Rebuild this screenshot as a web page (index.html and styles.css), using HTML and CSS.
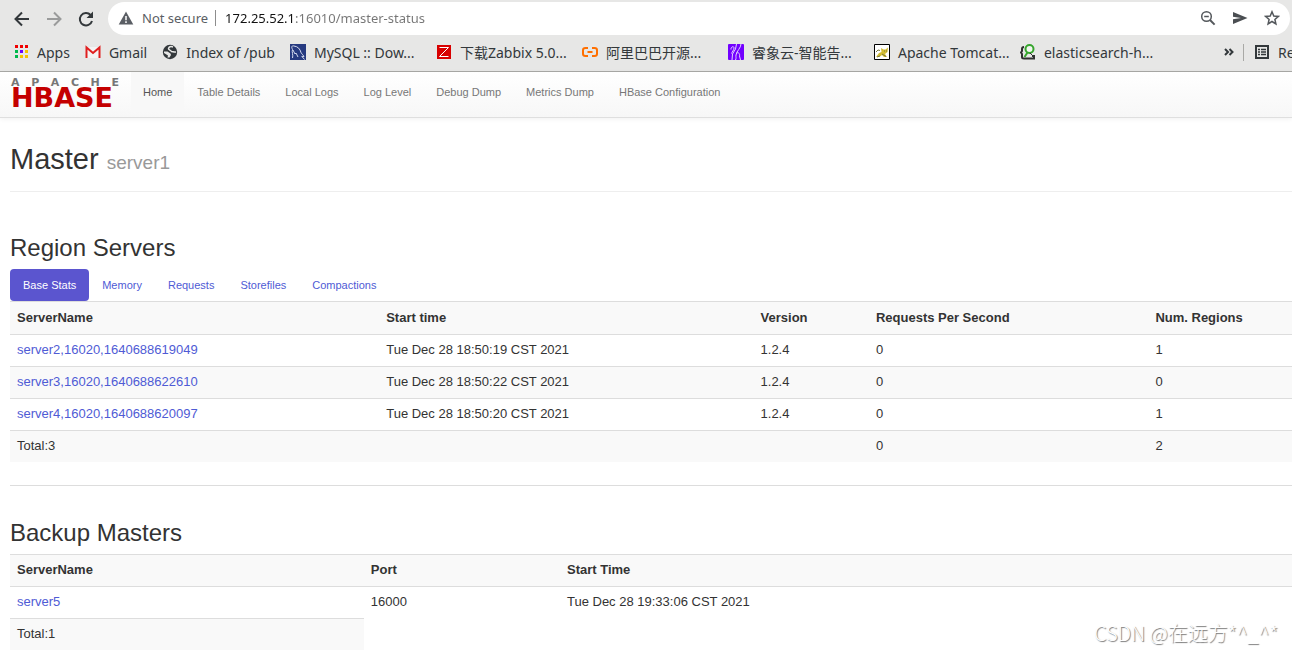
FILE: index.html
```html
<!DOCTYPE html>
<html lang="en">

<head>
    <meta charset="UTF-8">
    <title>Master: server1</title>
    <link rel="stylesheet" href="styles.css">
</head>

<body>
    <header class="browser">
        <div class="toolbar">
            <button class="tool" aria-label="Back">
                <svg width="20" height="20" viewBox="0 0 20 20" fill="none" stroke="#33383b" stroke-width="2"><path d="M17 10H4M10 3.500L3.500 10L10 16.500"/></svg>
            </button>
            <button class="tool" aria-label="Forward">
                <svg width="20" height="20" viewBox="0 0 20 20" fill="none" stroke="#9a9b9b" stroke-width="2"><path d="M3 10H16M10 3.500L16.500 10L10 16.500"/></svg>
            </button>
            <button class="tool" aria-label="Reload">
                <svg width="20" height="20" viewBox="0 0 20 20"><path d="M14.600 6A6.200 6.200 0 1 0 16 12" fill="none" stroke="#33383b" stroke-width="2"/><path d="M17 2.500V9H10.500Z" fill="#33383b"/></svg>
            </button>
            <div class="addressBar">
                <svg width="16" height="16" viewBox="0 0 16 16"><path d="M8 1.500L15.300 14.500H.7Z" fill="#5a5e64"/><path d="M8 6v4.200M8 11.200v1.800" stroke="#fff" stroke-width="1.500"/></svg>
                <span class="notSecure">Not secure</span>
                <input class="url" type="text" aria-label="Address" value="172.25.52.1:16010/master-status">
                <button class="tool" aria-label="Zoom">
                    <svg width="16" height="16" viewBox="0 0 16 16" fill="none" stroke="#54585c" stroke-width="1.500"><circle cx="6.500" cy="6.500" r="4.800"/><path d="M4.200 6.500h4.600"/><path d="M10 10l4.600 4.600" stroke-width="2"/></svg>
                </button>
                <button class="tool" aria-label="Send">
                    <svg width="16" height="16" viewBox="0 0 16 16"><path d="M1 2L15.500 8L1 14V9.300L9 8L1 6.700Z" fill="#4a4e52"/></svg>
                </button>
                <button class="tool" aria-label="Bookmark this page">
                    <svg width="16" height="16" viewBox="0 0 16 16"><path d="M8 1.800L9.800 6L14.300 6.400L10.900 9.400L11.900 13.900L8 11.500L4.100 13.900L5.100 9.400L1.700 6.400L6.200 6Z" fill="none" stroke="#54585c" stroke-width="1.500"/></svg>
                </button>
            </div>
        </div>
        <nav class="bookmarks">
            <a href="#">
                <svg width="16" height="16" viewBox="0 0 16 16"><path d="M2 1h3v3H2zM7 1h3v3H7zM12 1h3v3h-3z" fill="#f00000"/><path d="M2 6h3v3H2zM2 11h3v3H2z" fill="#00b84c"/><path d="M7 6h3v3H7z" fill="#6a00ff"/><path d="M12 6h3v3h-3zM7 11h3v3H7zM12 11h3v3h-3z" fill="#f5c400"/></svg>
                Apps
            </a>
            <a href="#">
                <svg width="16" height="16" viewBox="0 0 16 16"><path d="M1 3h14v11H1z" fill="#f4f4f4"/><path d="M1.500 14V3.500L8 9L14.500 3.500V14" fill="none" stroke="#e02020" stroke-width="2"/></svg>
                Gmail
            </a>
            <a href="#">
                <svg width="16" height="16" viewBox="0 0 16 16"><circle cx="8" cy="8" r="7.200" fill="#33383b"/><path d="M11 3C8.500 2 7 3 6.500 4.500C6 6 9 6 9.500 7.500C11 7.500 12 8.500 14 8" fill="none" stroke="#e7e7e6" stroke-width="1.500"/><path d="M2 7.500H5.500L8.500 9.500L9 11L7.500 13.500H5.500L6 11.500L2 9Z" fill="#e7e7e6"/></svg>
                Index of /pub
            </a>
            <a class="long" href="#">
                <svg width="16" height="16" viewBox="0 0 16 16"><path d="M0 0h16v16H0z" fill="#263a80"/><path d="M2.500 14C3.500 11 1.500 8 2.500 5.500C1 2.500 2 1.500 4 2C8 2.500 10 5 11 8.500C12 10.500 13.500 11 14 12.500L11.800 12.300L14.500 15.500M3 6L5 10L6 9L8 13" fill="none" stroke="#d5dbef"/></svg>
                MySQL :: Dow...
            </a>
            <a class="long" href="#">
                <svg width="16" height="16" viewBox="0 0 16 16"><path d="M1 1h14v14H1z" fill="#d80000"/><path d="M3.500 3.500H12.500L3.500 12.500H12.500" fill="none" stroke="#fff"/></svg>
                下载Zabbix 5.0...
            </a>
            <a class="long" href="#">
                <svg width="16" height="16" viewBox="0 0 16 16" fill="none" stroke="#ff6f00" stroke-width="2"><path d="M6 4H3.500Q1 4 1 6V10Q1 12 3.500 12H6M10 4H12.500Q15 4 15 6V10Q15 12 12.500 12H10M5.500 8H10.500"/></svg>
                阿里巴巴开源...
            </a>
            <a class="long" href="#">
                <svg width="16" height="16" viewBox="0 0 16 16"><rect width="16" height="16" rx="1" fill="#7200ff"/><path d="M8.500 0L7.500 5L4.500 10L4 16M3 5.500C2.500 3 6 1.500 6 4C6 6 4 8 3.500 9.500M13 0C13 4 8.500 7 8 11C7.700 13 8.500 14 7.500 16M8.500 9C11 8 12 10 11.500 12L12.500 16" fill="none" stroke="#e3d2ff"/></svg>
                睿象云-智能告...
            </a>
            <a class="long" href="#">
                <svg width="16" height="16" viewBox="0 0 16 16"><path d="M.5.500h15v15H.5z" fill="#fff" stroke="#000"/><path d="M2 13L5 9L7.500 8L7 4L9.500 5.500H11.500L14 3.500L13.500 8L11 10L13 13H10L8 11L6 12.500Z" fill="#d3bd34"/><path d="M2 8L4 6L6 6.500M3 13L6 12M8 10L12 12.500M10 7h1M12 7h1" fill="none" stroke="#77783c"/></svg>
                Apache Tomcat...
            </a>
            <a class="long" href="#">
                <svg width="16" height="16" viewBox="0 0 16 16"><path d="M4 3Q2 3 2 5V7L1 8.500L2 10V13Q2 14.500 4 14.500H14V12H12" fill="none" stroke="#303030" stroke-width="2"/><circle cx="9.500" cy="5" r="4" fill="#f1f5ef" stroke="#36a52d" stroke-width="2"/><path d="M7.500 8.500L4.500 13" stroke="#36a52d" stroke-width="2"/><path d="M10 9L13 12" stroke="#303030"/></svg>
                elasticsearch-h...
            </a>
            <button class="tool more" aria-label="More bookmarks">
                <svg width="12" height="12" viewBox="0 0 12 12" fill="none" stroke="#33383b" stroke-width="2"><path d="M2 3L5 6L2 9M6.500 3L9.500 6L6.500 9"/></svg>
            </button>
            <a class="readingList" href="#">
                <svg width="16" height="16" viewBox="0 0 16 16" fill="none" stroke="#33383b"><path d="M2 2h12v12H2z" stroke-width="2"/><path d="M4 5.500h2M7 5.500h5M4 8h2M7 8h5M4 10.500h2M7 10.500h5" stroke-width="1.500"/></svg>
                Reading list
            </a>
        </nav>
    </header>

    <nav class="navbar">
        <a class="brand" href="#">
            <span class="brandTop"><span>A</span><span>P</span><span>A</span><span>C</span><span>H</span><span>E</span></span>
            <span class="brandName">HBASE</span>
        </a>
        <a class="active" href="#">Home</a>
        <a href="#">Table Details</a>
        <a href="#">Local Logs</a>
        <a href="#">Log Level</a>
        <a href="#">Debug Dump</a>
        <a href="#">Metrics Dump</a>
        <a href="#">HBase Configuration</a>
    </nav>

    <main class="container">
        <div class="pageHeader">
            <h1>Master <small>server1</small></h1>
        </div>

        <section class="regionServers">
            <h2>Region Servers</h2>
            <div class="pills">
                <a class="active" href="#">Base Stats</a>
                <a href="#">Memory</a>
                <a href="#">Requests</a>
                <a href="#">Storefiles</a>
                <a href="#">Compactions</a>
            </div>
            <table class="regionTable">
                <tr>
                    <th class="name">ServerName</th>
                    <th class="start">Start time</th>
                    <th class="version">Version</th>
                    <th class="requests">Requests Per Second</th>
                    <th>Num. Regions</th>
                </tr>
                <tr>
                    <td><a href="#">server2,16020,1640688619049</a></td>
                    <td>Tue Dec 28 18:50:19 CST 2021</td>
                    <td>1.2.4</td>
                    <td>0</td>
                    <td>1</td>
                </tr>
                <tr>
                    <td><a href="#">server3,16020,1640688622610</a></td>
                    <td>Tue Dec 28 18:50:22 CST 2021</td>
                    <td>1.2.4</td>
                    <td>0</td>
                    <td>0</td>
                </tr>
                <tr>
                    <td><a href="#">server4,16020,1640688620097</a></td>
                    <td>Tue Dec 28 18:50:20 CST 2021</td>
                    <td>1.2.4</td>
                    <td>0</td>
                    <td>1</td>
                </tr>
                <tr>
                    <td>Total:3</td>
                    <td></td>
                    <td></td>
                    <td>0</td>
                    <td>2</td>
                </tr>
            </table>
        </section>

        <section class="backupMasters">
            <h2>Backup Masters</h2>
            <table class="backupTable">
                <tr>
                    <th class="name">ServerName</th>
                    <th class="port">Port</th>
                    <th>Start Time</th>
                </tr>
                <tr>
                    <td><a href="#">server5</a></td>
                    <td>16000</td>
                    <td>Tue Dec 28 19:33:06 CST 2021</td>
                </tr>
                <tr>
                    <td>Total:1</td>
                </tr>
            </table>
        </section>
    </main>

    <div class="watermark">CSDN @在远方*^_^*</div>
</body>

</html>
```

FILE: styles.css
```css
* { box-sizing: border-box; }
body { margin: 0; overflow: hidden; background-color: #fff; color: #333; font-family: "Liberation Sans", Arial, sans-serif; font-size: 13px; line-height: 17px; }
a { color: #4f5bd5; text-decoration: none; }
svg { display: block; flex: none; }
h1, h2 { margin: 0; font-weight: normal; }

/* browser bars */
.browser { background-color: #e7e7e6; border-bottom: 1px solid #a9a9a6; font-family: "Noto Sans", "Noto Sans CJK SC", sans-serif; font-size: 14px; overflow: hidden; }
.toolbar { display: flex; align-items: center; gap: 12px; padding: 2px 2px 0 12px; }
.tool { display: flex; padding: 0; border: none; background: none; cursor: pointer; }
.addressBar { flex: 1; display: flex; align-items: center; gap: 16px; height: 33px; padding: 0 10px 1px; background-color: #fff; border-radius: 17px; }
.notSecure { margin-left: -8px; margin-right: -9px; padding-right: 7px; border-right: 1px solid #8d8d8d; color: #5a5e64; font-size: 13px; line-height: 16px; white-space: nowrap; }
.url { flex: 1; min-width: 0; padding: 0; margin-left: 2px; border: none; outline: none; color: #757575; font-family: inherit; font-size: 13px; -webkit-text-fill-color: transparent; background: linear-gradient(to right, #111 70px, #757575 70px); -webkit-background-clip: text; background-clip: text; }
.bookmarks { display: flex; align-items: center; gap: 15px; height: 36px; padding: 0 0 2px 13px; }
.bookmarks a { display: flex; align-items: center; flex: none; gap: 8px; color: #33383b; white-space: nowrap; }
.bookmarks .long { width: 131px; }
.more { margin-left: auto; }
.bookmarks .readingList { width: 49px; margin-left: -7px; padding-left: 10px; border-left: 1px solid #a9a9a6; overflow: hidden; }

/* navbar */
.navbar { display: flex; align-items: flex-start; gap: 1px; height: 46px; background-image: linear-gradient(#fff, #f7f7f7); border-bottom: 1px solid #dfdfdf; box-shadow: 0 1px 5px rgba(0, 0, 0, 0.06); }
.navbar a { padding: 12px; color: #777; font-size: 11px; line-height: 16px; }
.navbar a.active { color: #555; background-color: #f8f8f8; }
.navbar .brand { display: flex; flex-direction: column; width: 130px; padding: 5px 11px 0 11px; line-height: 11px; }
.brandTop { display: flex; justify-content: space-between; color: #777; font-family: "DejaVu Sans", sans-serif; font-size: 11px; font-weight: bold; line-height: 11px; }
.brandName { color: #c40000; font-family: "DejaVu Sans", sans-serif; font-size: 27px; font-weight: bold; line-height: 20px; }

.container { padding-left: 10px; }
.pageHeader { padding: 24px 0 15px; border-bottom: 1px solid #eee; }
h1 { font-size: 29px; line-height: 34px; }
h1 small { color: #999; font-size: 19px; line-height: 20px; }
h2 { font-size: 24px; line-height: 34px; }

.regionServers { padding: 39px 0 23px; border-bottom: 1px solid #ddd; }
.pills { display: flex; margin-top: 4px; }
.pills a { padding: 8px 13px; border-radius: 4px; font-size: 11px; line-height: 16px; }
.pills a.active { color: #fff; background-color: #5b55cf; }

table { width: 100%; table-layout: fixed; border-collapse: separate; border-spacing: 0; }
th, td { padding: 6px 7px 8px; border-top: 1px solid #ddd; text-align: left; }
tr:nth-child(odd) th, tr:nth-child(odd) td { background-color: #f9f9f9; }
.regionTable th { padding-top: 7px; }
.regionTable .name { width: 28.8%; }
.regionTable .start { width: 29.2%; }
.regionTable .version { width: 9%; }
.regionTable .requests { width: 21.8%; }
.backupMasters { padding-top: 30px; }
.backupMasters h2 { margin-bottom: 4px; }
.backupTable .name { width: 27.6%; }
.backupTable .port { width: 15.3%; }

.watermark { position: absolute; right: 14px; bottom: 6px; color: #fff; font-family: "Noto Sans CJK SC", sans-serif; font-size: 20px; font-weight: 300; line-height: 26px; text-shadow: 1px 1px 1px #777; }
```
